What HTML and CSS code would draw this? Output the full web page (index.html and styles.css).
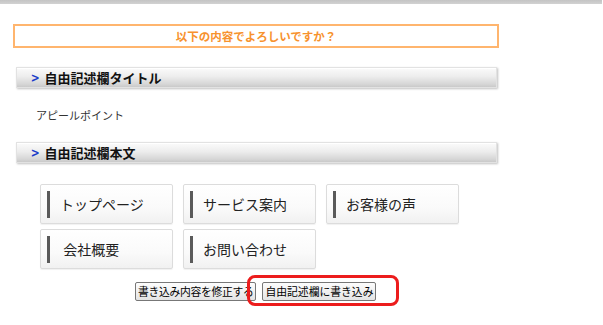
FILE: index.html
```html
<!DOCTYPE html>
<html lang="ja">
<head>
<meta charset="utf-8">
<title>確認</title>
<link rel="stylesheet" href="styles.css">
</head>
<body>
<div class="topbar"></div>
<div class="page">
  <div class="confirm">以下の内容でよろしいですか？</div>

  <div class="section-head"><span class="chev">&gt;</span>自由記述欄タイトル</div>
  <p class="appeal">アピールポイント</p>

  <div class="section-head"><span class="chev">&gt;</span>自由記述欄本文</div>

  <div class="nav">
    <div class="nav-item"><span class="nav-bar"></span>トップページ</div>
    <div class="nav-item"><span class="nav-bar"></span>サービス案内</div>
    <div class="nav-item"><span class="nav-bar"></span>お客様の声</div>
    <div class="nav-item"><span class="nav-bar"></span>&nbsp;会社概要</div>
    <div class="nav-item"><span class="nav-bar"></span>お問い合わせ</div>
  </div>

  <div class="actions">
    <button class="btn btn-fix">書き込み内容を修正する</button>
    <button class="btn btn-write">自由記述欄に書き込み</button>
    <div class="highlight"></div>
  </div>
</div>
</body>
</html>
```

FILE: styles.css
```css
html, body {
  margin: 0;
  padding: 0;
  background: #fff;
}
body {
  font-family: "Noto Sans CJK JP", "Liberation Sans", sans-serif;
  color: #222;
  width: 603px;
  height: 325px;
  overflow: hidden;
}
.topbar {
  height: 4px;
  background: linear-gradient(#c4c4c4, #d2d2d2);
  margin-right: 1px;
}
.page {
  padding-left: 13px;
}
.confirm {
  margin-top: 20px;
  width: 482px;
  height: 20px;
  border: 2px solid #ffb56e;
  color: #f7922e;
  font-size: 11.5px;
  font-weight: bold;
  text-align: center;
  line-height: 20px;
}
.section-head {
  margin-top: 19px;
  margin-left: 3px;
  width: 479px;
  height: 19px;
  border: 1px solid #e2e2e2;
  box-shadow: inset 0 1px 0 #fff, 1px 1px 2px rgba(0,0,0,0.25);
  background: linear-gradient(#fbfbfb 0%, #ededed 45%, #d6d6d6 85%, #c9c9c9 100%);
  font-size: 13px;
  font-weight: bold;
  line-height: 20px;
  color: #111;
  display: flex;
  align-items: center;
}
.chev {
  color: #1a3cc8;
  font-family: "DejaVu Sans", sans-serif;
  font-weight: bold;
  font-size: 12.5px;
  margin-left: 13px;
  margin-right: 4px;
  transform: scaleX(0.85);
}
.appeal {
  margin: 19px 0 0 23px;
  height: 16px;
  font-size: 11px;
  line-height: 16px;
  color: #333;
}
.nav {
  margin: 21px 0 0 27px;
  display: grid;
  grid-template-columns: repeat(3, 133px);
  column-gap: 10px;
  row-gap: 5px;
}
.nav-item {
  height: 38px;
  border: 1px solid #dcdcdc;
  border-radius: 2px;
  background: linear-gradient(#ffffff 0%, #fafafa 60%, #f1f1f1 100%);
  box-shadow: 0 1px 1px rgba(0,0,0,0.06);
  display: flex;
  align-items: center;
  font-size: 14px;
  color: #222;
}
.nav-bar {
  width: 3px;
  height: 27px;
  background: #5a5a5a;
  margin-left: 6px;
  margin-right: 10px;
}
.actions {
  position: relative;
  margin: 13px 0 0 122px;
  display: flex;
  gap: 6px;
}
.btn {
  font-family: "Noto Sans CJK JP", sans-serif;
  font-size: 10.8px;
  height: 19px;
  padding: 0 2px;
  line-height: 15px;
  border: 1px solid #777;
  border-radius: 2px;
  background: linear-gradient(#fdfdfd, #e4e4e4);
  color: #000;
  white-space: nowrap;
}
.btn-fix {
  letter-spacing: -0.3px;
}
.highlight {
  position: absolute;
  left: 112px;
  top: -7px;
  width: 146px;
  height: 25px;
  border: 3px solid #ec1c1c;
  border-radius: 8px;
  pointer-events: none;
}
```
